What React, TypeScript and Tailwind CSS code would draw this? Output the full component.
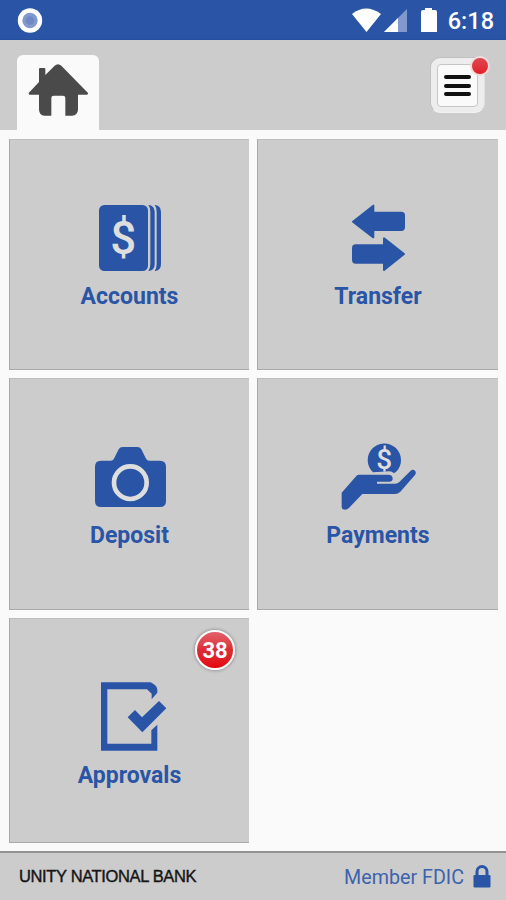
import { FC, ReactNode } from "react"

interface TileInterface {
    title: string
    viewBox: string
    icon: ReactNode
    badge?: number
}

const AccountsIcon = () => (
    <>
        <rect x="87" y="45" width="147" height="198" rx="16" />
        <path d="M235 45 H237 Q254 48 254 66 V222 Q254 240 237 243 H235 Q241 236 241 222 V66 Q241 52 235 45Z" />
        <path d="M254 45 H256 Q273 48 273 66 V222 Q273 240 256 243 H254 Q260 236 260 222 V66 Q260 52 254 45Z" />
        <text x="160" y="191" textAnchor="middle" fontSize="137" fontWeight="500" fill="#dedede">$</text>
    </>
)

const TransferIcon = () => (
    <g stroke="#2a55a6" strokeWidth="6" strokeLinejoin="round">
        <path d="M99 94 L160 46 V67 H244 Q252 67 252 75 V111 Q252 119 244 119 H160 V141Z" />
        <path d="M252 191 L192 144 V165 H107 Q99 165 99 173 V209 Q99 217 107 217 H192 V239Z" />
    </g>
)

const DepositIcon = () => (
    <>
        <path d="M92 92 H123 Q130 92 133 84 L146 58 Q150 51 158 51 H202 Q210 51 214 58 L227 84 Q230 92 237 92 H270 Q288 92 288 110 V213 Q288 231 270 231 H93 Q75 231 75 213 V110 Q75 92 92 92Z" />
        <circle cx="181" cy="158" r="49" fill="none" stroke="#dedede" strokeWidth="14" />
    </>
)

const PaymentsIcon = () => (
    <>
        <path d="M159 127 A50 50 0 1 1 230 124 L222 130 Q216 124 208 124Z" />
        <text x="193" y="117" textAnchor="middle" fontSize="84" fontWeight="500" fill="#dedede">$</text>
        <path d="M116 134 H205 Q218 134 218 146 Q218 155 207 155 H171 V161 H225 Q233 161 238 156 L272 122 Q279 117 285 122 Q290 128 285 135 L241 185 Q234 192 225 192 H127 L86 235 Q78 242 69 238 Q65 236 65 230 V188 L107 140 Q111 134 116 134Z" />
    </>
)

const ApprovalsIcon = () => (
    <>
        <path d="M93 187 H242 Q262 197 262 210 V218 L245 238 V221 L231 208 H112 V371 H244 V331 L262 314 V392 H93Z" />
        <path d="M173 292 L195 270 L216 292 L267 243 L289 265 L217 337Z" />
    </>
)

const tiles: TileInterface[] = [
    { title: "Accounts", viewBox: "0 0 360 255", icon: <AccountsIcon /> },
    { title: "Transfer", viewBox: "-6 -1 360 255", icon: <TransferIcon /> },
    { title: "Deposit", viewBox: "0 -3 360 255", icon: <DepositIcon /> },
    { title: "Payments", viewBox: "-6 -3 360 255", icon: <PaymentsIcon /> },
    { title: "Approvals", viewBox: "0 147 360 255", icon: <ApprovalsIcon />, badge: 38 },
]

const Tile: FC<{ data: TileInterface }> = ({ data }) => {
    return (
        <button className="relative flex flex-col items-center border-t border-l border-b border-t-[#bdbdbd] border-l-[#a9a9a9] border-b-[#a9a9a9] bg-[#cccccc] pt-[50px]">
            <svg width="120" height="85" viewBox={data.viewBox} className="block shrink-0" fill="#2a55a6">
                {data.icon}
            </svg>
            <span className="mt-[6px] text-[23px] leading-[31px] font-bold text-[#2a55a6]">{data.title}</span>
            {
                data.badge &&
                <span className="absolute top-[11px] right-[14px] flex h-[40px] w-[40px] items-center justify-center rounded-full border-2 border-[#fafafa] bg-linear-to-b from-[#e2606a] via-[#dc2b35] to-[#e60008] text-[22px] font-bold text-white shadow-[0_0_3px_1px_rgba(0,0,0,0.25)]">
                    {data.badge}
                </span>
            }
        </button>
    )
}

const StatusBar = () => (
    <div className="flex h-10 items-center justify-between border-b border-[#24509f] bg-[#2a55a6]">
        <svg width="26" height="26" viewBox="0 0 26 26" className="ml-[17px]">
            <circle cx="13" cy="13.5" r="12.2" fill="#fff" />
            <circle cx="13" cy="13.5" r="7.7" fill="#8299cd" />
            <circle cx="13" cy="13.5" r="4.2" fill="#6d88c3" />
        </svg>
        <div className="flex items-center">
            <svg width="90" height="26" viewBox="0 0 90 26" fill="#fff">
                <path d="M3 7 Q17 -4 32 7 L17.5 25Z" />
                <path d="M58 2 V25 H35Z" fill="#8299cd" />
                <path d="M49 11 V25 H35Z" />
                <path d="M76 1 H83 V3 H86 Q88 3 88 5 V25 H72 V5 Q72 3 74 3 H76Z" />
            </svg>
            <span className="mt-[3px] mr-[12px] ml-[9px] text-[23.5px] leading-[28px] font-medium text-white">6:18</span>
        </div>
    </div>
)

const Header = () => (
    <header className="flex h-[90px] items-end justify-between bg-[#cccccc]">
        <div className="ml-[17px] h-[75px] w-[82px] rounded-t-[6px] bg-[#fafafa]">
            <svg width="82" height="75" viewBox="51 165 246 225" fill="#4a4a4a">
                <path d="M86 279 L117 246 V207 Q117 204 120 204 H133 Q136 204 136 207 V225 L164 197 Q174 188 184 197 L264 279 Q265 283 261 284 H234 V329 Q233 346 216 347 H196 V294 Q196 287 189 287 H161 Q154 287 154 294 V347 H133 Q118 345 117 329 V284 H89 Q85 283 86 279Z" />
            </svg>
        </div>
        <button className="relative mr-[21px] mb-[17px] flex h-[56px] w-[55px] items-center justify-center rounded-[10px] border border-[#c0c0c0] border-r-[#e0e0e0] border-b-[#f2f2f2] bg-[#ededed]">
            <span className="flex h-[43px] w-[41px] flex-col items-center justify-center gap-[4.5px] rounded-[4px] border border-[#c6c6c6] bg-[#fafafa] pt-px">
                <i className="h-[4px] w-[27px] rounded-full bg-[#111]" />
                <i className="h-[4px] w-[27px] rounded-full bg-[#111]" />
                <i className="h-[4px] w-[27px] rounded-full bg-[#111]" />
            </span>
            <span className="absolute -top-[2px] -right-[6px] h-[20px] w-[20px] rounded-full border-2 border-[#f1dcdc] bg-linear-to-b from-[#dc4650] to-[#e51b25]" />
        </button>
    </header>
)

const Footer = () => (
    <footer className="flex h-[49px] items-center justify-between border-t-2 border-[#939393] bg-[#cccccc]">
        <span className="ml-[19px] font-['Liberation_Sans',sans-serif] text-[16.5px] tracking-[-0.36px] text-[#151515] [-webkit-text-stroke:0.4px_#151515]">UNITY NATIONAL BANK</span>
        <div className="mr-[15px] flex items-center gap-[9px]">
            <span className="pt-[2px] text-[19.7px] text-[#3d63ac]">Member FDIC</span>
            <svg width="18" height="23" viewBox="0 0 18 23" fill="#2a55a6">
                <path d="M4 11 V6.5 A5 5 0 0 1 14 6.5 V11" fill="none" stroke="#2a55a6" strokeWidth="3" />
                <rect x="0.5" y="10" width="17" height="12.5" rx="1.2" />
            </svg>
        </div>
    </footer>
)

export default function App() {
    return (
        <div className="flex h-[900px] w-[506px] flex-col overflow-hidden bg-[#fafafa] font-[Roboto,sans-serif]">
            <StatusBar />
            <Header />
            <main className="grid flex-1 grid-cols-[240px_241px] grid-rows-[231px_232px_225px] content-start gap-x-2 gap-y-2 pt-[9px] pl-[9px]">
                {
                    tiles.map((tile) => (
                        <Tile key={tile.title} data={tile} />
                    ))
                }
            </main>
            <Footer />
        </div>
    )
}
